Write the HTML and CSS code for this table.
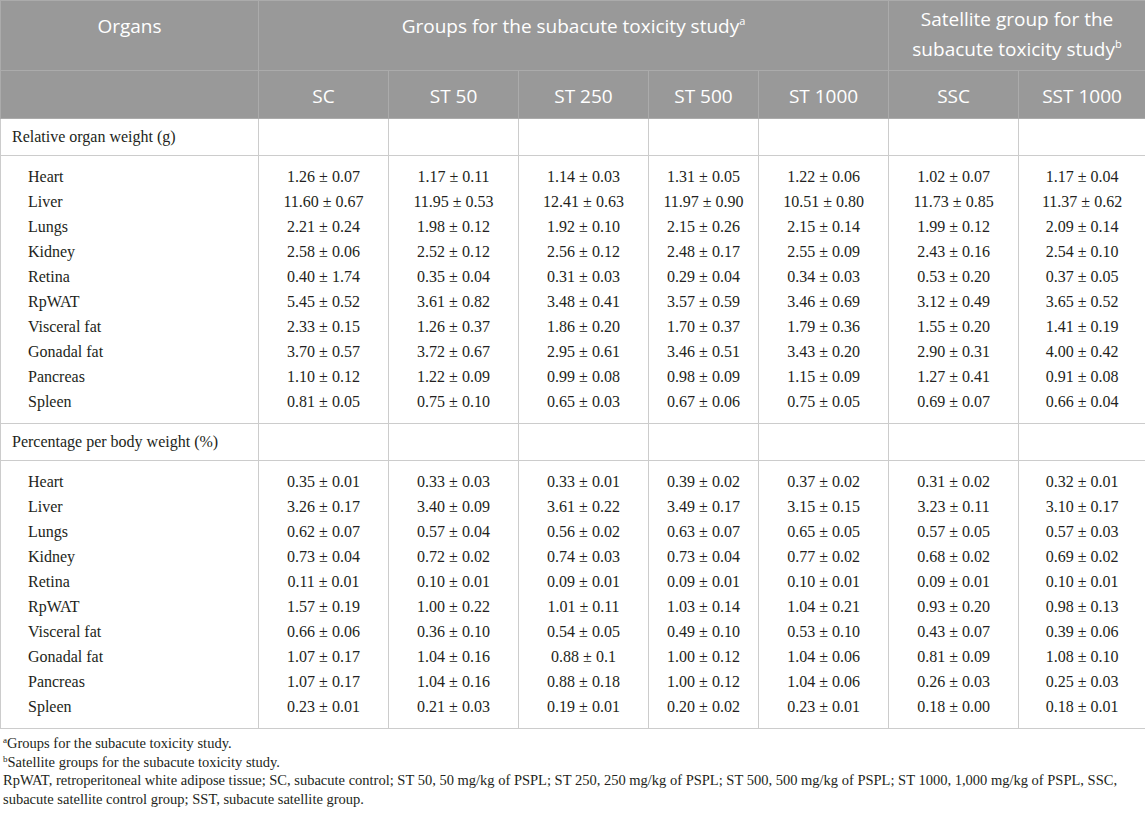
FILE: index.html
```html
<!DOCTYPE html>
<html>
<head>
<meta charset="utf-8">
<link rel="stylesheet" href="styles.css">
</head>
<body>
<table class="tbl">
<colgroup>
<col class="c0"><col class="c1"><col class="c1"><col class="c1"><col class="c4"><col class="c1"><col class="c1"><col class="c7">
</colgroup>
<thead>
<tr class="h1">
<th>Organs</th>
<th colspan="5">Groups for the subacute toxicity study<sup>a</sup></th>
<th colspan="2" class="sat">Satellite group for the subacute toxicity study<sup>b</sup></th>
</tr>
<tr class="h2">
<th></th><th>SC</th><th>ST 50</th><th>ST 250</th><th>ST 500</th><th>ST 1000</th><th>SSC</th><th>SST 1000</th>
</tr>
</thead>
<tbody>
<tr class="sec"><td>Relative organ weight (g)</td><td></td><td></td><td></td><td></td><td></td><td></td><td></td></tr>
</tbody>
<tbody class="grp">
<tr><td>Heart</td><td>1.26 ± 0.07</td><td>1.17 ± 0.11</td><td>1.14 ± 0.03</td><td>1.31 ± 0.05</td><td>1.22 ± 0.06</td><td>1.02 ± 0.07</td><td>1.17 ± 0.04</td></tr>
<tr><td>Liver</td><td>11.60 ± 0.67</td><td>11.95 ± 0.53</td><td>12.41 ± 0.63</td><td>11.97 ± 0.90</td><td>10.51 ± 0.80</td><td>11.73 ± 0.85</td><td>11.37 ± 0.62</td></tr>
<tr><td>Lungs</td><td>2.21 ± 0.24</td><td>1.98 ± 0.12</td><td>1.92 ± 0.10</td><td>2.15 ± 0.26</td><td>2.15 ± 0.14</td><td>1.99 ± 0.12</td><td>2.09 ± 0.14</td></tr>
<tr><td>Kidney</td><td>2.58 ± 0.06</td><td>2.52 ± 0.12</td><td>2.56 ± 0.12</td><td>2.48 ± 0.17</td><td>2.55 ± 0.09</td><td>2.43 ± 0.16</td><td>2.54 ± 0.10</td></tr>
<tr><td>Retina</td><td>0.40 ± 1.74</td><td>0.35 ± 0.04</td><td>0.31 ± 0.03</td><td>0.29 ± 0.04</td><td>0.34 ± 0.03</td><td>0.53 ± 0.20</td><td>0.37 ± 0.05</td></tr>
<tr><td>RpWAT</td><td>5.45 ± 0.52</td><td>3.61 ± 0.82</td><td>3.48 ± 0.41</td><td>3.57 ± 0.59</td><td>3.46 ± 0.69</td><td>3.12 ± 0.49</td><td>3.65 ± 0.52</td></tr>
<tr><td>Visceral fat</td><td>2.33 ± 0.15</td><td>1.26 ± 0.37</td><td>1.86 ± 0.20</td><td>1.70 ± 0.37</td><td>1.79 ± 0.36</td><td>1.55 ± 0.20</td><td>1.41 ± 0.19</td></tr>
<tr><td>Gonadal fat</td><td>3.70 ± 0.57</td><td>3.72 ± 0.67</td><td>2.95 ± 0.61</td><td>3.46 ± 0.51</td><td>3.43 ± 0.20</td><td>2.90 ± 0.31</td><td>4.00 ± 0.42</td></tr>
<tr><td>Pancreas</td><td>1.10 ± 0.12</td><td>1.22 ± 0.09</td><td>0.99 ± 0.08</td><td>0.98 ± 0.09</td><td>1.15 ± 0.09</td><td>1.27 ± 0.41</td><td>0.91 ± 0.08</td></tr>
<tr><td>Spleen</td><td>0.81 ± 0.05</td><td>0.75 ± 0.10</td><td>0.65 ± 0.03</td><td>0.67 ± 0.06</td><td>0.75 ± 0.05</td><td>0.69 ± 0.07</td><td>0.66 ± 0.04</td></tr>
</tbody>
<tbody>
<tr class="sec"><td>Percentage per body weight (%)</td><td></td><td></td><td></td><td></td><td></td><td></td><td></td></tr>
</tbody>
<tbody class="grp">
<tr><td>Heart</td><td>0.35 ± 0.01</td><td>0.33 ± 0.03</td><td>0.33 ± 0.01</td><td>0.39 ± 0.02</td><td>0.37 ± 0.02</td><td>0.31 ± 0.02</td><td>0.32 ± 0.01</td></tr>
<tr><td>Liver</td><td>3.26 ± 0.17</td><td>3.40 ± 0.09</td><td>3.61 ± 0.22</td><td>3.49 ± 0.17</td><td>3.15 ± 0.15</td><td>3.23 ± 0.11</td><td>3.10 ± 0.17</td></tr>
<tr><td>Lungs</td><td>0.62 ± 0.07</td><td>0.57 ± 0.04</td><td>0.56 ± 0.02</td><td>0.63 ± 0.07</td><td>0.65 ± 0.05</td><td>0.57 ± 0.05</td><td>0.57 ± 0.03</td></tr>
<tr><td>Kidney</td><td>0.73 ± 0.04</td><td>0.72 ± 0.02</td><td>0.74 ± 0.03</td><td>0.73 ± 0.04</td><td>0.77 ± 0.02</td><td>0.68 ± 0.02</td><td>0.69 ± 0.02</td></tr>
<tr><td>Retina</td><td>0.11 ± 0.01</td><td>0.10 ± 0.01</td><td>0.09 ± 0.01</td><td>0.09 ± 0.01</td><td>0.10 ± 0.01</td><td>0.09 ± 0.01</td><td>0.10 ± 0.01</td></tr>
<tr><td>RpWAT</td><td>1.57 ± 0.19</td><td>1.00 ± 0.22</td><td>1.01 ± 0.11</td><td>1.03 ± 0.14</td><td>1.04 ± 0.21</td><td>0.93 ± 0.20</td><td>0.98 ± 0.13</td></tr>
<tr><td>Visceral fat</td><td>0.66 ± 0.06</td><td>0.36 ± 0.10</td><td>0.54 ± 0.05</td><td>0.49 ± 0.10</td><td>0.53 ± 0.10</td><td>0.43 ± 0.07</td><td>0.39 ± 0.06</td></tr>
<tr><td>Gonadal fat</td><td>1.07 ± 0.17</td><td>1.04 ± 0.16</td><td>0.88 ± 0.1</td><td>1.00 ± 0.12</td><td>1.04 ± 0.06</td><td>0.81 ± 0.09</td><td>1.08 ± 0.10</td></tr>
<tr><td>Pancreas</td><td>1.07 ± 0.17</td><td>1.04 ± 0.16</td><td>0.88 ± 0.18</td><td>1.00 ± 0.12</td><td>1.04 ± 0.06</td><td>0.26 ± 0.03</td><td>0.25 ± 0.03</td></tr>
<tr><td>Spleen</td><td>0.23 ± 0.01</td><td>0.21 ± 0.03</td><td>0.19 ± 0.01</td><td>0.20 ± 0.02</td><td>0.23 ± 0.01</td><td>0.18 ± 0.00</td><td>0.18 ± 0.01</td></tr>
</tbody>
</table>
<div class="notes">
<p><sup>a</sup>Groups for the subacute toxicity study.</p>
<p><sup>b</sup>Satellite groups for the subacute toxicity study.</p>
<p class="last">RpWAT, retroperitoneal white adipose tissue; SC, subacute control; ST 50, 50 mg/kg of PSPL; ST 250, 250 mg/kg of PSPL; ST 500, 500 mg/kg of PSPL; ST 1000, 1,000 mg/kg of PSPL, SSC,<br>subacute satellite control group; SST, subacute satellite group.</p>
</div>
</body>
</html>
```

FILE: styles.css
```css
html, body {
  margin: 0;
  padding: 0;
  background: #ffffff;
}
body {
  width: 1145px;
  color: #231f20;
  font-family: "Liberation Serif", "Times New Roman", serif;
}
.tbl {
  width: 1145px;
  border-collapse: collapse;
  table-layout: fixed;
}
.c0 { width: 258px; }
.c1 { width: 130px; }
.c4 { width: 110px; }
.c7 { width: 127px; }

thead th {
  background: #999999;
  color: #ffffff;
  font-family: "Open Sans", "Liberation Sans", sans-serif;
  font-weight: 400;
  font-size: 19px;
  border: 1px solid #ababab;
  text-align: center;
  padding: 0 6px;
}
thead th sup {
  font-size: 11px;
  vertical-align: 8px;
  line-height: 0;
}
.h1 th {
  height: 70px;
  vertical-align: top;
  padding-top: 10px;
  line-height: 30px;
  box-sizing: border-box;
}
.h1 th.sat {
  padding-top: 3px;
}
.h2 th {
  height: 48px;
  vertical-align: middle;
  line-height: 24px;
  box-sizing: border-box;
  padding-top: 2px;
}
tbody td {
  border-left: 1px solid #cccccc;
  border-right: 1px solid #cccccc;
  font-size: 16px;
  text-align: center;
  padding: 0;
  white-space: nowrap;
}
.sec td {
  height: 37px;
  box-sizing: border-box;
  border-bottom: 1px solid #cccccc;
  text-align: left;
  padding-left: 11px;
}
.grp td {
  height: 25px;
  line-height: 25px;
}
.grp td:first-child {
  text-align: left;
  padding-left: 27px;
}
.grp tr:first-child td {
  padding-top: 8px;
}
.grp tr:last-child td {
  padding-bottom: 9px;
  border-bottom: 1px solid #cccccc;
}
.notes {
  padding: 5px 0 0 3px;
  font-size: 14.5px;
  line-height: 18.7px;
}
.notes p {
  margin: 0;
}
.notes .last {
  white-space: nowrap;
}
.notes sup {
  font-size: 9px;
  vertical-align: 5px;
  line-height: 0;
}
```
